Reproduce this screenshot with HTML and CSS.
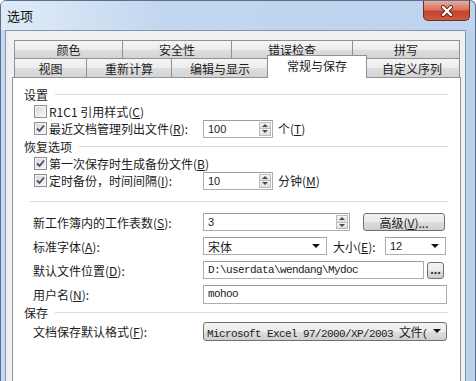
FILE: index.html
```html
<!DOCTYPE html>
<html lang="zh-CN">
<head>
    <meta charset="UTF-8">
    <meta name="viewport" content="width=device-width, initial-scale=1.0">
    <title>选项</title>
    <link rel="stylesheet" href="styles.css">
</head>
<body>
    <div class="window">
        <div class="titlebar">
            <span class="title">选项</span>
            <div class="close">
                <svg width="14" height="12" viewBox="0 0 14 12">
                    <path d="M3 2 L11 10 M11 2 L3 10" stroke="#5a2018" stroke-width="4" stroke-linecap="round"/>
                    <path d="M3 2 L11 10 M11 2 L3 10" stroke="#fff" stroke-width="2.4" stroke-linecap="round"/>
                </svg>
            </div>
        </div>

        <div class="client">
            <div class="tab-row">
                <div class="tab t-color">颜色</div>
                <div class="tab t-security">安全性</div>
                <div class="tab t-errors">错误检查</div>
                <div class="tab t-spell">拼写</div>
            </div>
            <div class="tab-row second">
                <div class="tab t-view">视图</div>
                <div class="tab t-calc">重新计算</div>
                <div class="tab t-edit">编辑与显示</div>
                <div class="tab t-general active">常规与保存</div>
                <div class="tab t-custom">自定义序列</div>
            </div>

            <div class="panel">
                <div class="group"><span>设置</span></div>
                <div class="check-row">
                    <div class="check-label">
                        <span class="check"></span>
                        <span>R1C1 引用样式(<u>C</u>)</span>
                    </div>
                </div>
                <div class="check-row">
                    <div class="check-label">
                        <span class="check on"><svg width="9" height="9" viewBox="0 0 9 9"><path d="M1 4.5 L3.5 7 L8 1.5" fill="none" stroke="#3d4f6e" stroke-width="1.8"/></svg></span>
                        <span>最近文档管理列出文件(<u>R</u>):</span>
                    </div>
                    <div class="field num">
                        <span class="value">100</span>
                        <span class="spin"><span class="up"></span><span class="down"></span></span>
                    </div>
                    <span class="unit">个(<u>T</u>)</span>
                </div>

                <div class="group"><span>恢复选项</span></div>
                <div class="check-row">
                    <div class="check-label wide">
                        <span class="check on"><svg width="9" height="9" viewBox="0 0 9 9"><path d="M1 4.5 L3.5 7 L8 1.5" fill="none" stroke="#3d4f6e" stroke-width="1.8"/></svg></span>
                        <span>第一次保存时生成备份文件(<u>B</u>)</span>
                    </div>
                </div>
                <div class="check-row">
                    <div class="check-label">
                        <span class="check on"><svg width="9" height="9" viewBox="0 0 9 9"><path d="M1 4.5 L3.5 7 L8 1.5" fill="none" stroke="#3d4f6e" stroke-width="1.8"/></svg></span>
                        <span>定时备份，时间间隔(<u>I</u>):</span>
                    </div>
                    <div class="field num">
                        <span class="value">10</span>
                        <span class="spin"><span class="up"></span><span class="down"></span></span>
                    </div>
                    <span class="unit">分钟(<u>M</u>)</span>
                </div>

                <div class="separator"></div>

                <div class="form-row">
                    <span class="form-label">新工作簿内的工作表数(<u>S</u>):</span>
                    <div class="field sheets">
                        <span class="value">3</span>
                        <span class="spin"><span class="up"></span><span class="down"></span></span>
                    </div>
                    <div class="button advanced">高级(<u>V</u>)...</div>
                </div>
                <div class="form-row">
                    <span class="form-label">标准字体(<u>A</u>):</span>
                    <div class="field combo font">
                        <span class="value cjk">宋体</span>
                        <span class="arrow"></span>
                    </div>
                    <span class="size-label">大小(<u>E</u>):</span>
                    <div class="field combo size">
                        <span class="value">12</span>
                        <span class="arrow"></span>
                    </div>
                </div>
                <div class="form-row">
                    <span class="form-label">默认文件位置(<u>D</u>):</span>
                    <div class="field path">
                        <span class="value mono">D:\userdata\wendang\Mydoc</span>
                    </div>
                    <div class="button browse">...</div>
                </div>
                <div class="form-row">
                    <span class="form-label">用户名(<u>N</u>):</span>
                    <div class="field user">
                        <span class="value mono">mohoo</span>
                    </div>
                </div>

                <div class="group save"><span>保存</span></div>
                <div class="form-row format-row">
                    <span class="form-label">文档保存默认格式(<u>F</u>):</span>
                    <div class="button select-list">
                        <span class="value mono">Microsoft Excel 97/2000/XP/2003 <span class="cjk">文件</span>(</span>
                        <span class="arrow"></span>
                    </div>
                </div>
            </div>
        </div>
    </div>
</body>
</html>
```

FILE: styles.css
```css
body {
    margin: 0;
    width: 476px;
    height: 381px;
    overflow: hidden;
    background: #ffffff;
    font-family: "Noto Sans CJK SC", sans-serif;
    font-size: 12px;
    color: #1c1c1c;
}
.window {
    height: 381px;
    box-sizing: border-box;
    display: flex;
    flex-direction: column;
    border: 1px solid #5b6f8c;
    border-bottom: none;
    border-radius: 6px 6px 0 0;
    background: linear-gradient(to right, #c6daf1, #b6cfec 45%, #aac6e8 60%, #bcd3ee);
}
.titlebar {
    height: 29px;
    flex-shrink: 0;
    display: flex;
    justify-content: space-between;
    align-items: flex-start;
    padding: 0 5px 0 6px;
    background: linear-gradient(to right, rgba(255, 255, 255, 0.45), rgba(255, 255, 255, 0.1) 35%, rgba(255, 255, 255, 0.25) 60%, rgba(255, 255, 255, 0.05));
}
.title {
    line-height: 29px;
    font-size: 13px;
    color: #111;
}
.close {
    width: 47px;
    height: 20px;
    box-sizing: border-box;
    border: 1px solid #6b3025;
    border-top: none;
    border-radius: 0 0 5px 5px;
    background: linear-gradient(#e9ad9e, #d9735f 45%, #c4432b 55%, #cf5a3e);
    display: flex;
    align-items: center;
    justify-content: center;
}
.client {
    flex: 1;
    margin: 0 9px 0 4px;
    border: 1px solid #8395ae;
    border-bottom: none;
    background: #f0f0f0;
    padding: 9px 4px 0 6px;
    overflow: hidden;
}

/* tabs */
.tab-row {
    display: flex;
    margin-left: 2px;
    height: 18px;
}
.tab-row.second {
    height: 19px;
}
.tab {
    box-sizing: border-box;
    height: 100%;
    border: 1px solid #8e9199;
    border-left: none;
    border-bottom: none;
    background: linear-gradient(#f5f5f5, #ececec 50%, #dedede 51%, #d4d4d4);
    text-align: center;
    line-height: 17px;
    color: #1c1c1c;
}
.tab:first-child {
    border-left: 1px solid #8e9199;
}
.tab-row.second .tab {
    line-height: 19px;
}
.t-color { width: 109px; }
.t-security { width: 109px; }
.t-errors { width: 121px; }
.t-spell { width: 107px; }
.t-view { width: 73px; }
.t-calc { width: 85px; }
.t-edit { width: 97px; }
.t-general { width: 100px; }
.t-custom { width: 95px; }
.tab.active {
    position: relative;
    z-index: 2;
    height: 23px;
    margin: -3px -2px 0 -2px;
    border-left: 1px solid #8e9199;
    background: #ffffff;
    line-height: 19px;
}
.tab-row.second .tab.active {
    line-height: 19px;
}

/* panel */
.panel {
    height: 330px;
    background: #ffffff;
    border: 1px solid #8e9199;
    padding: 7px 12px 0 11px;
}
.group {
    display: flex;
    align-items: center;
    gap: 7px;
    height: 18px;
}
.group::after {
    content: "";
    flex: 1;
    border-top: 1px solid #d6d9dd;
}
.group.save {
    margin-top: -3px;
}
.check-row {
    display: flex;
    align-items: center;
    height: 17px;
    padding-left: 10px;
}
.check-label {
    width: 169px;
    display: flex;
    align-items: center;
    gap: 2px;
    white-space: nowrap;
}
.check-label.wide {
    width: auto;
}
.check {
    width: 13px;
    height: 13px;
    box-sizing: border-box;
    border: 1px solid #8f8f8f;
    box-shadow: inset 0 0 0 1px #f4f4f4;
    background: linear-gradient(135deg, #d6d6d6, #f8f8f8);
    display: flex;
    align-items: center;
    justify-content: center;
}
.separator {
    border-top: 1px solid #d6d9dd;
    margin: 12px 0 8px 6px;
}
.form-row {
    display: flex;
    align-items: center;
    height: 24px;
    padding-left: 9px;
    white-space: nowrap;
}
.format-row {
    height: 20px;
}
.form-label {
    width: 170px;
}

/* fields */
.field {
    box-sizing: border-box;
    height: 18px;
    border: 1px solid #abadb3;
    border-top-color: #9a9da4;
    background: #ffffff;
    display: flex;
    align-items: center;
    padding-left: 4px;
}
.value {
    font-family: "Liberation Sans", sans-serif;
    font-size: 11px;
    color: #1c1c1c;
}
.value.cjk, .cjk {
    font-family: "Noto Sans CJK SC", sans-serif;
    font-size: 12px;
}
.value.mono {
    font-family: "Liberation Mono", monospace;
    font-size: 11px;
    letter-spacing: -0.6px;
}
.field.num { width: 70px; }
.field.sheets { width: 147px; }
.field.font { width: 124px; }
.field.size { width: 61px; }
.field.path { width: 221px; }
.field.user { width: 244px; height: 19px; }
.spin {
    margin-left: auto;
    margin-right: 1px;
    width: 12px;
    height: 14px;
    display: flex;
    flex-direction: column;
}
.spin span {
    flex: 1;
    border: 1px solid #b8bcc2;
    background: linear-gradient(#f6f6f6, #dedede);
    display: flex;
    align-items: center;
    justify-content: center;
}
.spin .down {
    border-top: none;
}
.spin .up::before {
    content: "";
    border-left: 3px solid transparent;
    border-right: 3px solid transparent;
    border-bottom: 3px solid #4a4a4a;
}
.spin .down::before {
    content: "";
    border-left: 3px solid transparent;
    border-right: 3px solid transparent;
    border-top: 3px solid #4a4a4a;
}
.unit {
    margin-left: 5px;
}
.arrow {
    margin-left: auto;
    margin-right: 6px;
    border-left: 4px solid transparent;
    border-right: 4px solid transparent;
    border-top: 4px solid #111;
}
.size-label {
    margin-left: 6px;
    width: 52px;
}

/* buttons */
.button {
    box-sizing: border-box;
    height: 18px;
    border: 1px solid #707070;
    border-radius: 3px;
    background: linear-gradient(#f2f2f2, #ebebeb 50%, #dddddd 51%, #cfcfcf);
    display: flex;
    align-items: center;
    justify-content: center;
}
.button.advanced {
    width: 82px;
    margin-left: 13px;
}
.button.browse {
    width: 17px;
    height: 17px;
    margin-left: 3px;
    font-weight: bold;
    font-size: 11px;
    line-height: 10px;
    padding-bottom: 3px;
}
.button.select-list {
    width: 244px;
    height: 19px;
    justify-content: flex-start;
    padding-left: 3px;
}
.button.select-list .arrow {
    margin-right: 5px;
}
```
